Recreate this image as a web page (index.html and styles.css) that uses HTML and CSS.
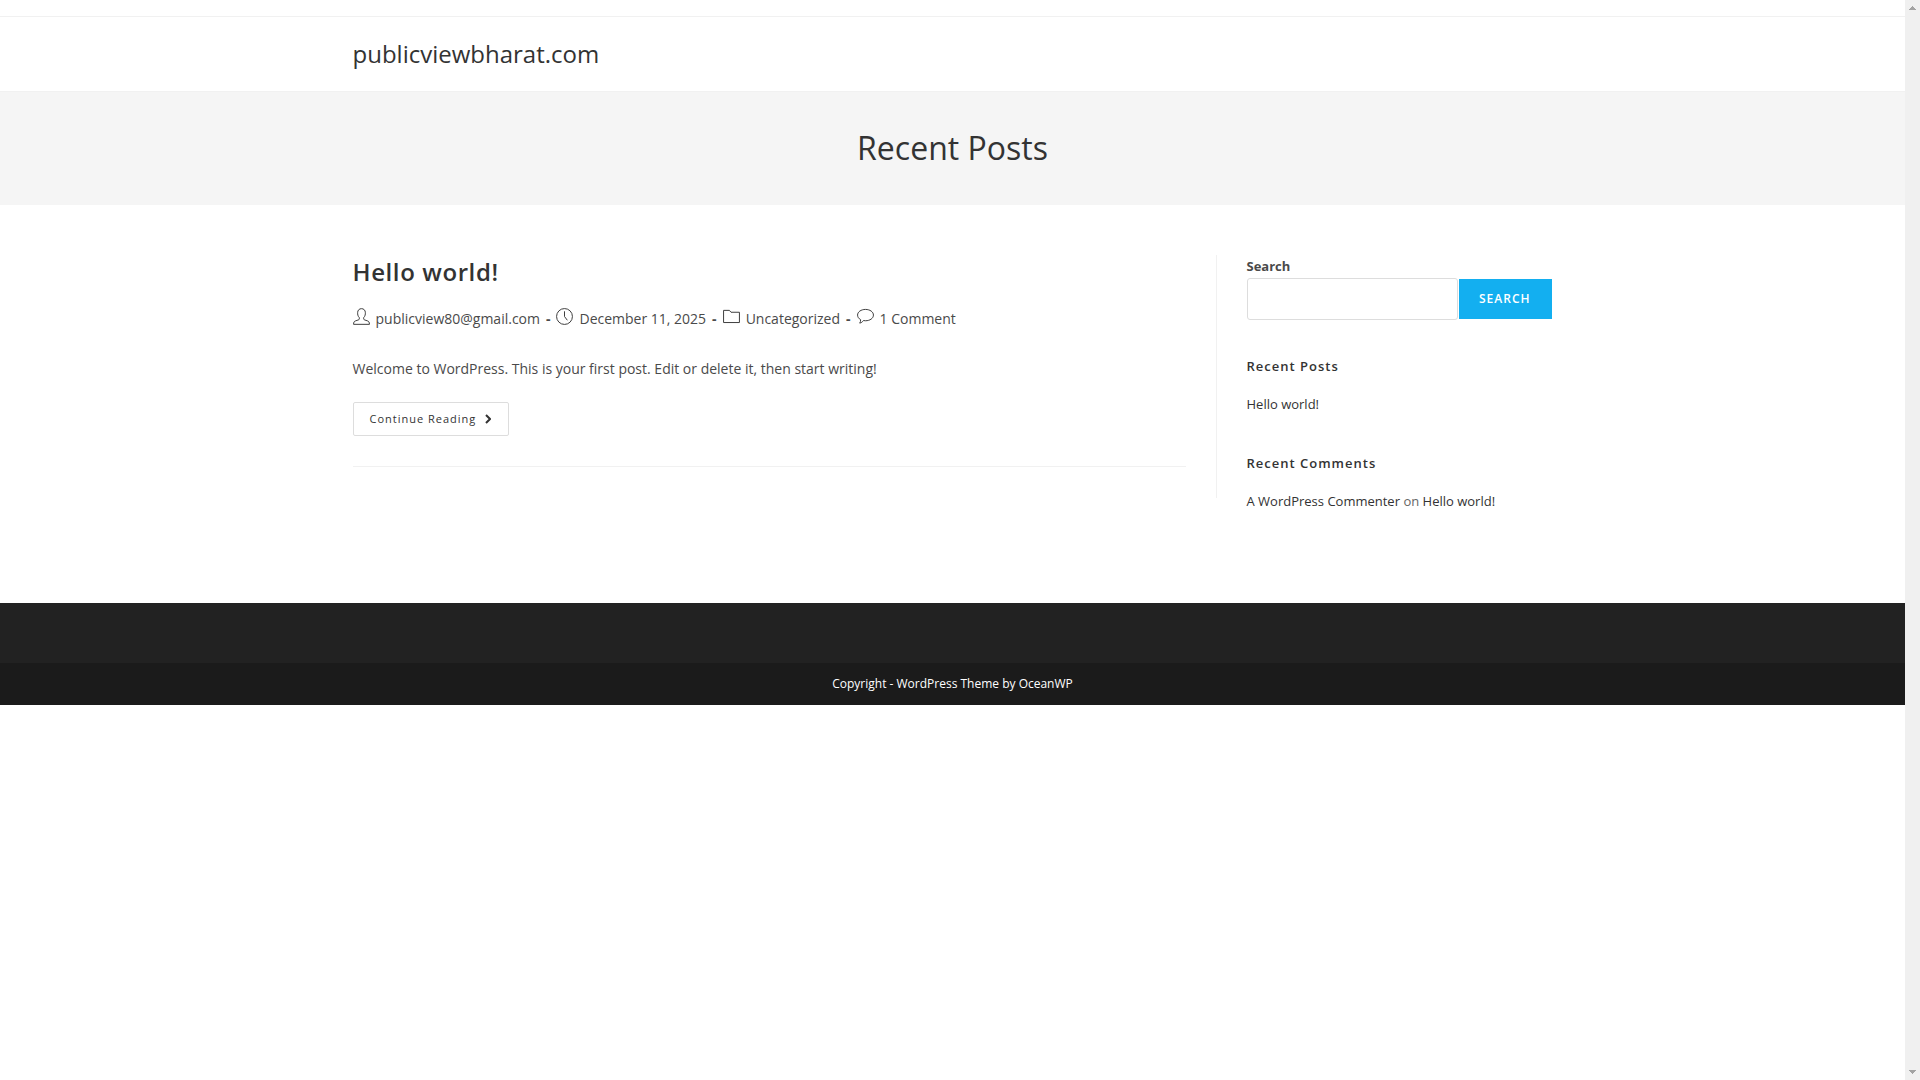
FILE: index.html
```html
<!DOCTYPE html>
<html lang="en">
<head>
    <meta charset="UTF-8">
    <meta name="viewport" content="width=device-width, initial-scale=1.0">
    <title>publicviewbharat.com</title>
    <link rel="stylesheet" href="styles.css">
</head>
<body>
    <div class="site">
        <div class="top-bar"></div>

        <header class="site-header">
            <div class="container">
                <a class="site-title" href="#">publicviewbharat.com</a>
            </div>
        </header>

        <div class="page-header">
            <h1>Recent Posts</h1>
        </div>

        <div class="container content-wrap">
            <main class="content">
                <article class="post">
                    <h2><a href="#">Hello world!</a></h2>
                    <ul class="meta">
                        <li>
                            <svg viewBox="0 0 18 18"><path d="M6.7 10.2C5 8.6 4.9 6.500 4.900 5 4.900 2.300 6.700.7 9 .7s4.100 1.600 4.100 4.300c0 1.500-.1 3.600-1.800 5.200v1.300c0 .6.400.9 1 1.100l3.200 1.100c1.200.4 1.900 1.400 1.900 3.600H.6c0-2.200.7-3.200 1.900-3.600l3.200-1.100c.6-.2 1-.5 1-1.100z"/></svg>
                            <a href="#">publicview80@gmail.com</a>
                        </li>
                        <li>
                            <svg viewBox="0 0 18 18"><circle cx="9" cy="9" r="8.400"/><path d="M9 3.500V9l3 4"/></svg>
                            <span>December 11, 2025</span>
                        </li>
                        <li>
                            <svg viewBox="0 0 18 18"><path d="M.6 15.400V2.500h6.200l1.700 2h8.900v10.900z"/></svg>
                            <a href="#">Uncategorized</a>
                        </li>
                        <li>
                            <svg viewBox="0 0 18 18"><path d="M9 1.500c4.700 0 8.400 2.600 8.400 6s-3.700 6-8.400 6c-.8 0-1.500-.1-2.200-.2-1 1.400-2.200 2.400-3.900 2.700.7-1 1-2.200.9-3.700C1.800 11.200.6 9.500.6 7.500c0-3.400 3.700-6 8.400-6z"/></svg>
                            <a href="#">1 Comment</a>
                        </li>
                    </ul>
                    <p class="summary">Welcome to WordPress. This is your first post. Edit or delete it, then start writing!</p>
                    <a class="readmore" href="#">Continue Reading
                        <svg viewBox="0 0 6 10"><path d="M1 1l4 4-4 4"/></svg>
                    </a>
                </article>
            </main>

            <aside class="sidebar">
                <form class="search">
                    <label for="search-input">Search</label>
                    <div class="search-row">
                        <input type="search" id="search-input">
                        <button type="button">Search</button>
                    </div>
                </form>
                <section class="widget">
                    <h4>Recent Posts</h4>
                    <p><a href="#">Hello world!</a></p>
                </section>
                <section class="widget">
                    <h4>Recent Comments</h4>
                    <p><a href="#">A WordPress Commenter</a> on <a href="#">Hello world!</a></p>
                </section>
            </aside>
        </div>

        <footer>
            <div class="footer-widgets"></div>
            <div class="footer-bottom">Copyright - WordPress Theme by OceanWP</div>
        </footer>
    </div>

    <div class="scrollbar">
        <svg viewBox="0 0 7 4"><path d="M3 0h1v1h1v1h1v1h1v1H0V3h1V2h1V1h1z"/></svg>
        <svg viewBox="0 0 7 4"><path d="M3 4h1V3h1V2h1V1h1V0H0v1h1v1h1v1h1z"/></svg>
    </div>
</body>
</html>
```
FILE: styles.css
```css
* {
    box-sizing: border-box;
}
body {
    display: flex;
    margin: 0;
    font-family: "Open Sans", Arial, sans-serif;
    font-size: 14px;
    line-height: 25px;
    color: #4a4a4a;
    background-color: #fff;
}
h1, h2, h4, p, ul {
    margin: 0;
    padding: 0;
}
a {
    color: inherit;
    text-decoration: none;
}
.site {
    flex: 1;
}
.container {
    width: 90%;
    max-width: 1200px;
    margin: 0 auto;
}
.top-bar {
    height: 17px;
    border-bottom: 1px solid #f1f1f1;
}
.site-header {
    padding: 20px 0;
    border-bottom: 1px solid #f1f1f1;
}
.site-title {
    display: block;
    font-size: 24px;
    line-height: 34px;
    color: #333;
}
.page-header {
    padding: 34px 0 35px;
    background-color: #f5f5f5;
    text-align: center;
}
.page-header h1 {
    font-size: 32px;
    line-height: 44px;
    font-weight: 400;
    color: #333;
}

/* Content */
.content-wrap {
    display: flex;
    align-items: flex-start;
    padding: 50px 0 89px;
}
.content {
    width: 72%;
    padding-right: 30px;
    border-right: 1px solid #f1f1f1;
}
.post {
    margin-bottom: 31px;
    padding-bottom: 30px;
    border-bottom: 1px solid #f1f1f1;
}
.post h2 {
    font-size: 24px;
    line-height: 34px;
    font-weight: 600;
    letter-spacing: 0.025em;
    color: #333;
}
.meta {
    display: flex;
    flex-wrap: wrap;
    margin-top: 17px;
    list-style: none;
}
.meta li {
    display: flex;
}
.meta li:not(:last-child)::after {
    content: "-";
    padding: 0 6px;
    font-weight: 700;
}
.meta svg {
    width: 17px;
    height: 17px;
    margin: 2px 6px 0 0;
    fill: none;
    stroke: #333;
}
.summary {
    margin-top: 25px;
}
.readmore {
    display: inline-flex;
    align-items: center;
    gap: 9px;
    margin-top: 21px;
    padding: 6px 16px;
    border: 1px solid #ddd;
    border-radius: 2px;
    font-size: 11px;
    line-height: 20px;
    letter-spacing: 1px;
    color: #333;
}
.readmore svg {
    width: 6px;
    height: 10px;
    margin-right: 1px;
    fill: none;
    stroke: #333;
    stroke-width: 2;
}

/* Sidebar */
.sidebar {
    width: 28%;
    padding-left: 30px;
    font-size: 13px;
}
.search label {
    display: block;
    line-height: 23px;
    font-weight: 700;
}
.search-row {
    display: flex;
    align-items: center;
    gap: 1px;
}
.search input {
    flex: 1;
    min-width: 0;
    height: 42px;
    padding: 6px 12px;
    border: 1px solid #ddd;
    border-radius: 3px;
    font: inherit;
    background: none;
    appearance: none;
}
.search button {
    height: 40px;
    padding: 0 21px 1px 20px;
    margin-right: 1px;
    border: 0;
    font-family: inherit;
    font-size: 12px;
    font-weight: 600;
    letter-spacing: 1px;
    text-transform: uppercase;
    color: #fff;
    background-color: #13aff0;
    cursor: pointer;
}
.widget {
    margin-top: 37px;
}
.widget h4 {
    margin-bottom: 16px;
    font-size: 13px;
    line-height: 18px;
    font-weight: 600;
    letter-spacing: 1px;
    color: #333;
}
.widget p {
    line-height: 26px;
    color: #666;
}
.widget a {
    color: #333;
}

/* Footer */
.footer-widgets {
    height: 60px;
    background-color: #222;
}
.footer-bottom {
    padding: 15px 0;
    background-color: #1b1b1b;
    font-size: 12px;
    line-height: 12px;
    text-align: center;
    color: #fff;
}

.scrollbar {
    display: flex;
    flex-direction: column;
    align-items: center;
    justify-content: space-between;
    width: 15px;
    height: 100vh;
    padding: 6px 0;
    background-color: #f0f0f0;
}
.scrollbar svg {
    width: 7px;
    height: 4px;
    fill: #a3a3a3;
    shape-rendering: crispEdges;
}
```
